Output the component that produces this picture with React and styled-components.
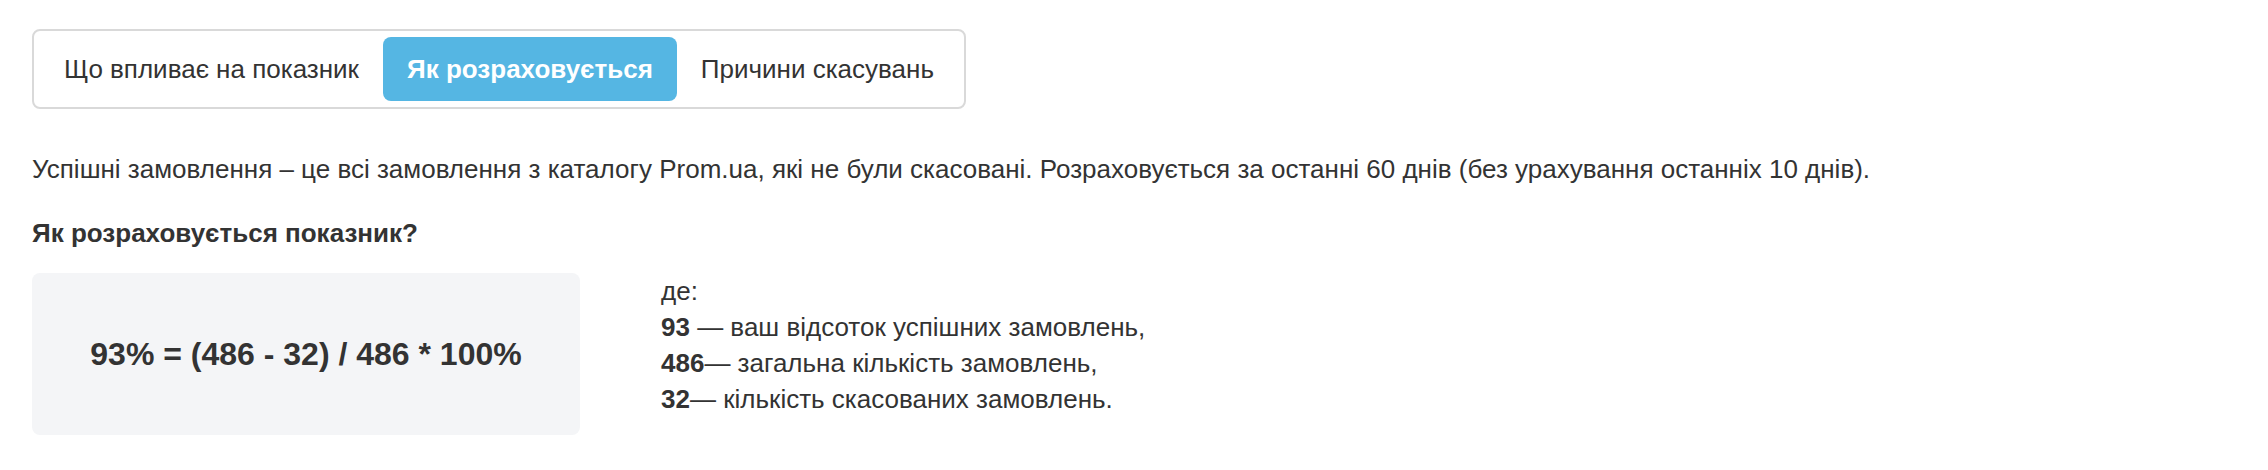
import styled, { createGlobalStyle } from "styled-components";

const GlobalStyle = createGlobalStyle`
  body {
    margin: 0;
    background: #fff;
    font-family: "Liberation Sans", Arial, sans-serif;
    color: #333;
  }
`;

const Page = styled.div`
  padding: 29px 32px 0;
`;

const Tabs = styled.div`
  display: inline-flex;
  padding: 6px;
  border: 2px solid #d9d9d9;
  border-radius: 8px;
`;

const Tab = styled.button`
  height: 64px;
  padding: 0 24px;
  border: 0;
  border-radius: 8px;
  font-family: inherit;
  font-size: 26px;
  font-weight: ${(p) => (p.$active ? 700 : 400)};
  color: ${(p) => (p.$active ? "#fff" : "#333")};
  background: ${(p) => (p.$active ? "#55b6e3" : "transparent")};
  cursor: pointer;
`;

const Text = styled.p`
  margin: 42px 0 0;
  font-size: 26px;
  line-height: 36px;
`;

const Heading = styled.h3`
  margin: 28px 0 0;
  font-size: 26px;
  line-height: 36px;
  font-weight: 700;
`;

const Calc = styled.div`
  display: flex;
  align-items: flex-start;
  gap: 81px;
  margin-top: 22px;
`;

const Formula = styled.div`
  width: 548px;
  height: 162px;
  display: flex;
  align-items: center;
  justify-content: center;
  background: #f4f5f7;
  border-radius: 8px;
  font-size: 32px;
  font-weight: 700;
`;

const Legend = styled.div`
  font-size: 26px;
  line-height: 36px;
`;

const Line = styled.div``;

const tabs = ["Що впливає на показник", "Як розраховується", "Причини скасувань"];

export default function App() {
  return (
    <>
      <GlobalStyle />
      <Page>
        <Tabs>
          {tabs.map((t, i) => (
            <Tab key={t} $active={i === 1}>
              {t}
            </Tab>
          ))}
        </Tabs>
        <Text>
          Успішні замовлення – це всі замовлення з каталогу Prom.ua, які не були
          скасовані. Розраховується за останні 60 днів (без урахування останніх
          10 днів).
        </Text>
        <Heading>Як розраховується показник?</Heading>
        <Calc>
          <Formula>93% = (486 - 32) / 486 * 100%</Formula>
          <Legend>
            <Line>де:</Line>
            <Line>
              <b>93</b> — ваш відсоток успішних замовлень,
            </Line>
            <Line>
              <b>486</b>— загальна кількість замовлень,
            </Line>
            <Line>
              <b>32</b>— кількість скасованих замовлень.
            </Line>
          </Legend>
        </Calc>
      </Page>
    </>
  );
}
